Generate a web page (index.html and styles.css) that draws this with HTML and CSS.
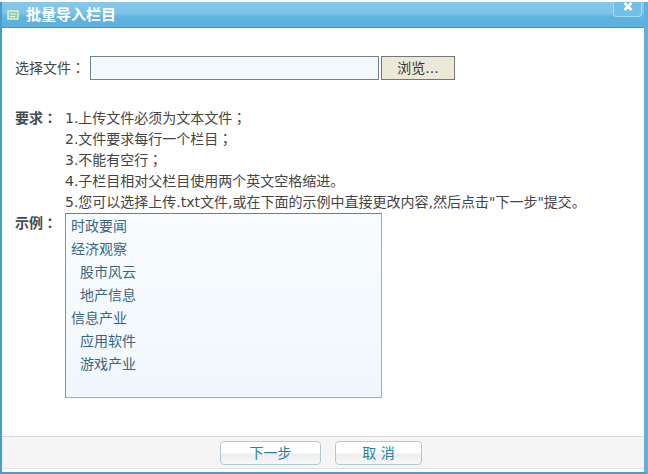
FILE: index.html
```html
<!DOCTYPE html>
<html lang="zh-CN">
<head>
  <meta charset="UTF-8">
  <meta name="viewport" content="width=device-width, initial-scale=1.0">
  <title>批量导入栏目</title>
  <link rel="stylesheet" href="styles.css">
</head>
<body>
  <div class="dialog">
    <!-- Title bar -->
    <div class="dialog-header">
      <svg class="title-icon" width="12" height="10" viewBox="0 0 12 10">
        <rect x="1" y="1" width="10" height="8" fill="#8fcfae" stroke="#e4f6c8" stroke-width="1.4"/>
        <path d="M3 4h6M3 6.5h5" stroke="#f4fbe0" stroke-width="1"/>
      </svg>
      <h1>批量导入栏目</h1>
      <button type="button" class="close" aria-label="关闭">
        <svg width="10" height="9" viewBox="0 0 10 9">
          <path d="M1.5 1l7 7M8.5 1l-7 7" stroke="#fff" stroke-width="2.8"/>
        </svg>
      </button>
    </div>

    <!-- Content -->
    <form class="dialog-body" id="import-form">
      <div class="file-row">
        <label for="file">选择文件<span class="punct" lang="ja">：</span></label>
        <input type="text" id="file">
        <button type="button" class="browse">浏览...</button>
      </div>

      <div class="row">
        <strong class="row-label">要求<span class="punct" lang="ja">：</span></strong>
        <div class="rules">
          <p>1.上传文件必须为文本文件<span class="punct" lang="ja">；</span></p>
          <p>2.文件要求每行一个栏目<span class="punct" lang="ja">；</span></p>
          <p>3.不能有空行<span class="punct" lang="ja">；</span></p>
          <p>4.子栏目相对父栏目使用两个英文空格缩进。</p>
          <p>5.您可以选择上传.txt文件,或在下面的示例中直接更改内容,然后点击"下一步"提交。</p>
        </div>
      </div>

      <div class="row">
        <label class="row-label" for="sample">示例<span class="punct" lang="ja">：</span></label>
        <textarea id="sample" spellcheck="false">时政要闻
经济观察
  股市风云
  地产信息
信息产业
  应用软件
  游戏产业</textarea>
      </div>
    </form>

    <!-- Buttons -->
    <div class="dialog-footer">
      <button type="submit" class="btn btn-next" form="import-form">下一步</button>
      <button type="button" class="btn">取 消</button>
    </div>
  </div>
</body>
</html>
```
FILE: styles.css
```css
* {
  box-sizing: border-box;
}

body {
  margin: 0;
  padding: 2px 0 1px;
  min-height: 100vh;
  display: flex;
  background: #fff;
  color: #444;
  font-family: "DejaVu Sans", "Noto Sans CJK SC", sans-serif;
  font-size: 14px;
  line-height: 21px;
}

button, input, textarea {
  font: inherit;
  margin: 0;
}

button {
  padding: 0;
  cursor: pointer;
}

.punct {
  font-family: "Noto Sans CJK JP", sans-serif;
  line-height: 1;
}

.dialog {
  flex: 1;
  display: flex;
  flex-direction: column;
  border: solid #4a9ccd;
  border-width: 0 4px 2px 2px;
  border-right-color: #5db1df;
}

/* Title bar */
.dialog-header {
  display: flex;
  align-items: center;
  height: 26px;
  padding: 0 2px 0 5px;
  background: linear-gradient(#86c8ea, #7cc3e8 45%, #5fb3e1 60%, #5db1e0);
  border-bottom: 1px solid #4c98c4;
}

.title-icon {
  margin-right: 7px;
}

.dialog-header h1 {
  flex: 1;
  margin: 0;
  color: #fff;
  font-size: 15px;
  line-height: 24px;
}

.close {
  align-self: flex-start;
  display: flex;
  justify-content: center;
  width: 29px;
  height: 15px;
  border: 1px solid #a5dbf5;
  border-top: 0;
  border-radius: 0 0 4px 4px;
  background: #72bee6;
}

/* Content */
.dialog-body {
  flex: 1;
  padding: 28px 12px 38px 13px;
}

.file-row {
  display: flex;
  align-items: center;
  margin-bottom: 28px;
}

.file-row label {
  width: 75px;
  white-space: nowrap;
}

.file-row input {
  width: 289px;
  height: 24px;
  margin-right: 2px;
  padding: 0 4px;
  border: 1px solid #73808c;
  background: #f4f9fd;
}

.browse {
  width: 74px;
  height: 24px;
  border: 1px solid #73777b;
  background: #ece9d8;
  color: #333;
}

.row {
  display: flex;
}

.row-label {
  flex: none;
  width: 50px;
  color: #3f4b55;
  font-weight: bold;
  white-space: nowrap;
}

.rules p {
  margin: 0;
}

textarea {
  display: block;
  width: 317px;
  height: 185px;
  padding: 1px 5px;
  border: 1px solid #a3adb5;
  border-top-color: #6f7d88;
  border-left-color: #84909a;
  background: linear-gradient(#f8fcfe, #f0f7fc);
  color: #3b657f;
  line-height: 23px;
  resize: none;
}

/* Buttons */
.dialog-footer {
  display: flex;
  justify-content: center;
  gap: 14px;
  padding: 4px 4px 3px 0;
  background: #f5f5f5;
  border-top: 1px solid #ddd;
  border-bottom: 1px solid #e2e2e2;
  margin-bottom: 3px;
}

.btn {
  width: 87px;
  height: 24px;
  border: 1px solid #b3c8d0;
  border-radius: 4px;
  background: linear-gradient(#fff 50%, #ececec 55%, #f8f8f8);
  color: #22859b;
  line-height: 20px;
}

.btn-next {
  width: 101px;
}
```
